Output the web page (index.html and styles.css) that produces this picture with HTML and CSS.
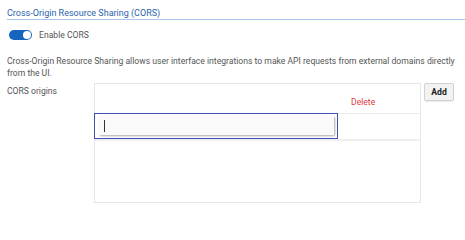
FILE: index.html
```html
<!DOCTYPE html>
<html>
<head>
<meta charset="utf-8">
<link rel="stylesheet" href="styles.css">
</head>
<body>
<div class="section">
  <div class="title">Cross-Origin Resource Sharing (CORS)</div>
  <div class="toggle-row">
    <span class="switch"><span class="knob"></span></span>
    <span class="toggle-label">Enable CORS</span>
  </div>
  <p class="desc">Cross-Origin Resource Sharing allows user interface integrations to make API requests from external domains directly from the UI.</p>
  <div class="field">
    <div class="field-label">CORS origins</div>
    <div class="table">
      <div class="thead">
        <div class="th-origin"></div>
        <div class="th-delete">Delete</div>
      </div>
      <div class="trow">
        <div class="cell-edit"><div class="input"><span class="caret"></span></div></div>
        <div class="cell-delete"></div>
      </div>
    </div>
    <button class="add-btn">Add</button>
  </div>
</div>
</body>
</html>
```
FILE: styles.css
```css
html, body {
  margin: 0;
  padding: 0;
  background: #ffffff;
}
body {
  font-family: Roboto, "Liberation Sans", sans-serif;
  font-size: 8.6px;
  color: #555555;
}
.section {
  padding: 0 0 0 7px;
}
.title {
  color: #2a63ad;
  font-size: 9px;
  height: 19px;
  line-height: 26px;
  border-bottom: 1px solid #a9c7ee;
  white-space: nowrap;
  overflow: hidden;
}
.toggle-row {
  display: flex;
  align-items: center;
  gap: 7px;
  margin-top: 9px;
  padding-left: 2px;
  height: 11px;
}
.switch {
  width: 23px;
  height: 10px;
  border-radius: 5px;
  background: #1565c0;
  display: flex;
  align-items: center;
  justify-content: flex-end;
  padding-right: 1px;
  box-sizing: border-box;
}
.knob {
  width: 8px;
  height: 8px;
  border-radius: 50%;
  background: #ffffff;
}
.toggle-label {
  color: #555555;
}
.desc {
  margin: 15px 0 0 0;
  line-height: 12px;
  padding-right: 6px;
}
.field {
  display: flex;
  align-items: flex-start;
  margin-top: 4px;
}
.field-label {
  width: 87px;
  padding-top: 3px;
}
.table {
  width: 327px;
  height: 120px;
  border: 1px solid #e6e6e6;
  box-sizing: border-box;
}
.thead {
  display: flex;
  height: 30px;
  border-bottom: 1px solid #ececec;
  box-sizing: border-box;
}
.th-origin {
  width: 243px;
}
.th-delete {
  color: #e0393e;
  padding: 13px 0 0 13px;
}
.trow {
  display: flex;
  height: 25px;
  border-bottom: 2px solid #efefef;
}
.cell-edit {
  width: 244px;
  height: 26px;
  margin: -1px 0 0 -1px;
  border: 1px solid #3f4fb5;
  box-sizing: border-box;
  padding: 2px 3px 3px 4px;
}
.input {
  height: 19px;
  background: #fafafa;
  box-shadow: 1px 1px 2px rgba(0,0,0,0.35);
  display: flex;
  align-items: center;
  padding-left: 5px;
}
.caret {
  width: 1px;
  height: 12px;
  background: #333333;
}
.cell-delete {
  flex: 1;
}
.add-btn {
  margin-left: 3px;
  width: 30px;
  height: 18px;
  padding: 0;
  font-family: Roboto, "Liberation Sans", sans-serif;
  font-size: 8.6px;
  font-weight: bold;
  color: #222222;
  background: #f3f3f3;
  border: 1px solid #d2d2d2;
  border-radius: 2px;
  box-shadow: 0 1px 1px rgba(0,0,0,0.08);
}
```
